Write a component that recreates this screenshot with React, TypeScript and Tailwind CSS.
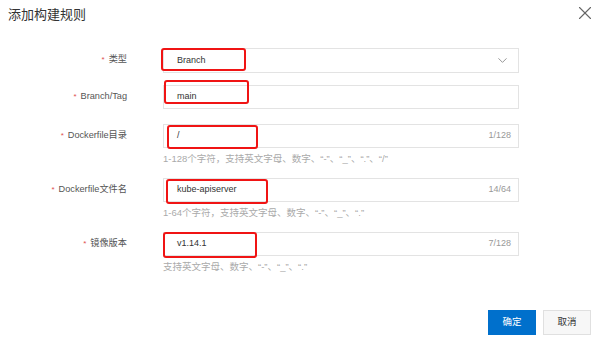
import { ChevronDown, X } from 'lucide-react';

const font = { fontFamily: '"Liberation Sans", "Noto Sans CJK SC", sans-serif' };

type Mark = { left: number; top: number; width: number; height: number };

function RedMark({ m }: { m: Mark }) {
  // annotation box drawn over the field
  return (
    <div
      className="pointer-events-none absolute rounded-[3px] border-[2.5px] border-[#f01414]"
      style={{ left: m.left, top: m.top, width: m.width, height: m.height }}
    />
  );
}

function Field({
  label,
  value,
  counter,
  help,
  select,
  mark,
  className,
}: {
  label: string;
  value: string;
  counter?: string;
  help?: string;
  select?: boolean;
  mark: Mark;
  className?: string;
}) {
  return (
    <div className={`flex ${className ?? ''}`}>
      <div className="flex h-[24px] w-[127px] shrink-0 items-center justify-end text-[9.2px] text-[#555]">
        <span className="mr-[4px] text-[8px] text-[#e05050]">*</span>
        {label}
      </div>
      <div className="ml-[36px] w-[356px]">
        <div className="relative flex h-[24px] items-center border border-[#e3e3e3] bg-white pl-[13px] pr-[7px] text-[9px] text-[#333]">
          <span className="flex-1">{value}</span>
          {counter && <span className="text-[9px] text-[#999]">{counter}</span>}
          {select && <ChevronDown className="mr-[1px] h-[15px] w-[15px] text-[#888]" strokeWidth={1.4} />}
          <RedMark m={mark} />
        </div>
        {help && <div className="mt-[5px] h-[12px] text-[9.5px] leading-[12px] text-[#aaa]">{help}</div>}
      </div>
    </div>
  );
}

export default function App() {
  return (
    <div className="relative h-[340px] w-[600px] overflow-hidden bg-white" style={font}>
      <div className="flex h-[30px] items-center justify-between pl-[8px] pr-[4px]">
        <h1 className="text-[13px] font-normal text-[#333]">添加构建规则</h1>
        <X className="-mt-[4px] h-[22px] w-[22px] text-[#666]" strokeWidth={1.2} />
      </div>

      <div className="mt-[18px] flex flex-col">
        <Field
          label="类型"
          value="Branch"
          select
          mark={{ left: -3, top: -1, width: 85, height: 23 }}
          className="[&>div>div]:h-[25px]"
        />
        <Field
          label="Branch/Tag"
          value="main"
          mark={{ left: 0, top: -6, width: 85, height: 24 }}
          className="mt-[12px]"
        />
        <Field
          label="Dockerfile目录"
          value="/"
          counter="1/128"
          help="1-128个字符，支持英文字母、数字、“-”、“_”、“.”、“/”"
          mark={{ left: 3, top: 0, width: 91, height: 24 }}
          className="mt-[15px]"
        />
        <Field
          label="Dockerfile文件名"
          value="kube-apiserver"
          counter="14/64"
          help="1-64个字符，支持英文字母、数字、“-”、“_”、“.”"
          mark={{ left: 2, top: 0, width: 102, height: 25 }}
          className="mt-[13px]"
        />
        <Field
          label="镜像版本"
          value="v1.14.1"
          counter="7/128"
          help="支持英文字母、数字、“-”、“_”、“.”"
          mark={{ left: -1, top: -1, width: 94, height: 26 }}
          className="mt-[13px]"
        />
      </div>

      <div className="mt-[37px] flex justify-end gap-[7px] pr-[9px]">
        <button className="h-[25px] w-[48px] bg-[#0070cc] text-[9.5px] text-white">确定</button>
        <button className="h-[25px] w-[48px] border border-[#e0e0e0] bg-[#f7f7f7] text-[9.5px] text-[#333]">取消</button>
      </div>
    </div>
  );
}
